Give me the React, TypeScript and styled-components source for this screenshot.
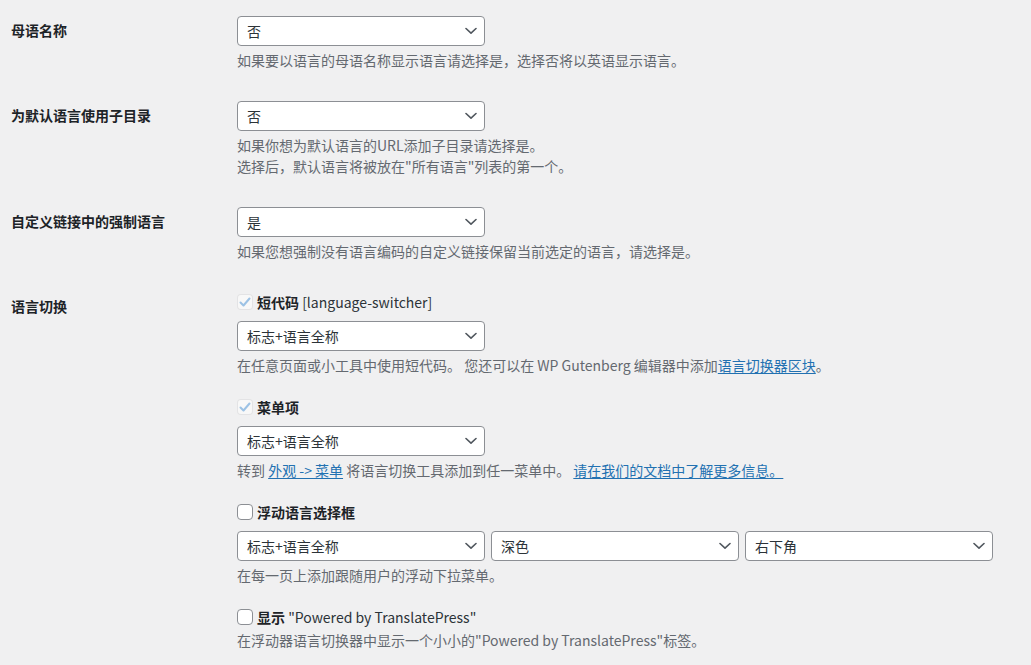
import styled, { createGlobalStyle } from "styled-components";

const GlobalStyle = createGlobalStyle`
  html, body {
    margin: 0;
    padding: 0;
    background: #f0f0f1;
  }
  body {
    font-family: "Noto Sans CJK SC", "Noto Sans", sans-serif;
    font-size: 14px;
    color: #3c434a;
  }
`;

const Page = styled.div`
  padding: 1px 0 0 11px;
  width: 1020px;
`;

const FormRow = styled.div`
  display: grid;
  grid-template-columns: 216px 1fr;
  align-items: start;
`;

const Th = styled.div`
  padding: 20px 10px 20px 0;
  font-size: 14px;
  line-height: 18px;
  font-weight: 700;
  color: #1d2327;
`;

const Td = styled.div`
  padding: 15px 10px;
  display: flex;
  flex-direction: column;
  align-items: flex-start;
`;

const SelectRow = styled.div<{ $mt?: number }>`
  display: flex;
  gap: 6px;
  margin-top: ${(p) => p.$mt ?? 0}px;
`;

const SelectBox = styled.div`
  box-sizing: border-box;
  width: 248px;
  height: 30px;
  display: flex;
  align-items: center;
  justify-content: space-between;
  padding: 0 7px 0 9px;
  background: #fff;
  border: 1px solid #8c8f94;
  border-radius: 4px;
  font-size: 14px;
  color: #2c3338;
  svg {
    flex: none;
  }
`;

const Desc = styled.p`
  margin: 4px 0 0;
  font-size: 14px;
  line-height: 21px;
  color: #646970;
  white-space: nowrap;
`;

const Link = styled.a`
  color: #2271b1;
  text-decoration: underline;
  text-underline-offset: 2px;
`;

const Group = styled.div<{ $first?: boolean }>`
  display: flex;
  flex-direction: column;
  align-items: flex-start;
  margin-top: ${(p) => (p.$first ? 0 : 21)}px;
`;

const CheckRow = styled.label`
  display: flex;
  align-items: center;
  height: 19px;
  font-size: 14px;
  color: #2c3338;
  white-space: pre;
  b {
    font-weight: 700;
    color: #1d2327;
  }
`;

const Box = styled.span<{ $disabled?: boolean }>`
  box-sizing: border-box;
  width: 16px;
  height: 16px;
  border-radius: 4px;
  display: inline-flex;
  align-items: center;
  justify-content: center;
  border: 1px solid
    ${(p) => (p.$disabled ? "rgba(220, 220, 222, 0.75)" : "#8c8f94")};
  background: ${(p) => (p.$disabled ? "rgba(255, 255, 255, 0.5)" : "#fff")};
  margin-right: 4px;
`;

const Chevron = () => (
  <svg width="12" height="8" viewBox="0 0 12 8">
    <path
      d="M1 1.5 L6 6.2 L11 1.5"
      fill="none"
      stroke="#50575e"
      strokeWidth="1.6"
      strokeLinecap="round"
      strokeLinejoin="round"
    />
  </svg>
);

const Select = ({ value }: { value: string }) => (
  <SelectBox>
    <span>{value}</span>
    <Chevron />
  </SelectBox>
);

const Checkbox = ({
  checked,
  disabled,
}: {
  checked?: boolean;
  disabled?: boolean;
}) => (
  <Box $disabled={disabled}>
    {checked && (
      <svg width="14" height="14" viewBox="0 0 14 14">
        <path
          d="M2.5 7.5 L5.5 10.5 L11.5 3.5"
          fill="none"
          stroke="#9cc2e5"
          strokeWidth="2"
          strokeLinecap="round"
          strokeLinejoin="round"
        />
      </svg>
    )}
  </Box>
);

export default function App() {
  return (
    <>
      <GlobalStyle />
      <Page>
        <FormRow>
          <Th>母语名称</Th>
          <Td>
            <Select value="否" />
            <Desc>如果要以语言的母语名称显示语言请选择是，选择否将以英语显示语言。</Desc>
          </Td>
        </FormRow>

        <FormRow>
          <Th>为默认语言使用子目录</Th>
          <Td>
            <Select value="否" />
            <Desc>
              如果你想为默认语言的URL添加子目录请选择是。
              <br />
              选择后，默认语言将被放在"所有语言"列表的第一个。
            </Desc>
          </Td>
        </FormRow>

        <FormRow>
          <Th>自定义链接中的强制语言</Th>
          <Td>
            <Select value="是" />
            <Desc>如果您想强制没有语言编码的自定义链接保留当前选定的语言，请选择是。</Desc>
          </Td>
        </FormRow>

        <FormRow>
          <Th>语言切换</Th>
          <Td>
            <Group $first>
              <CheckRow>
                <Checkbox checked disabled />
                <b>短代码</b> [language-switcher]
              </CheckRow>
              <SelectRow $mt={10}>
                <Select value="标志+语言全称" />
              </SelectRow>
              <Desc>
                在任意页面或小工具中使用短代码。 您还可以在 WP Gutenberg 编辑器中添加
                <Link href="#">语言切换器区块</Link>。
              </Desc>
            </Group>

            <Group>
              <CheckRow>
                <Checkbox checked disabled />
                <b>菜单项</b>
              </CheckRow>
              <SelectRow $mt={10}>
                <Select value="标志+语言全称" />
              </SelectRow>
              <Desc>
                转到 <Link href="#">外观 -&gt; 菜单</Link> 将语言切换工具添加到任一菜单中。{" "}
                <Link href="#">请在我们的文档中了解更多信息。 </Link>
              </Desc>
            </Group>

            <Group>
              <CheckRow>
                <Checkbox />
                <b>浮动语言选择框</b>
              </CheckRow>
              <SelectRow $mt={10}>
                <Select value="标志+语言全称" />
                <Select value="深色" />
                <Select value="右下角" />
              </SelectRow>
              <Desc>在每一页上添加跟随用户的浮动下拉菜单。</Desc>
            </Group>

            <Group>
              <CheckRow>
                <Checkbox />
                <b>显示</b> "Powered by TranslatePress"
              </CheckRow>
              <Desc>在浮动器语言切换器中显示一个小小的"Powered by TranslatePress"标签。</Desc>
            </Group>
          </Td>
        </FormRow>
      </Page>
    </>
  );
}
